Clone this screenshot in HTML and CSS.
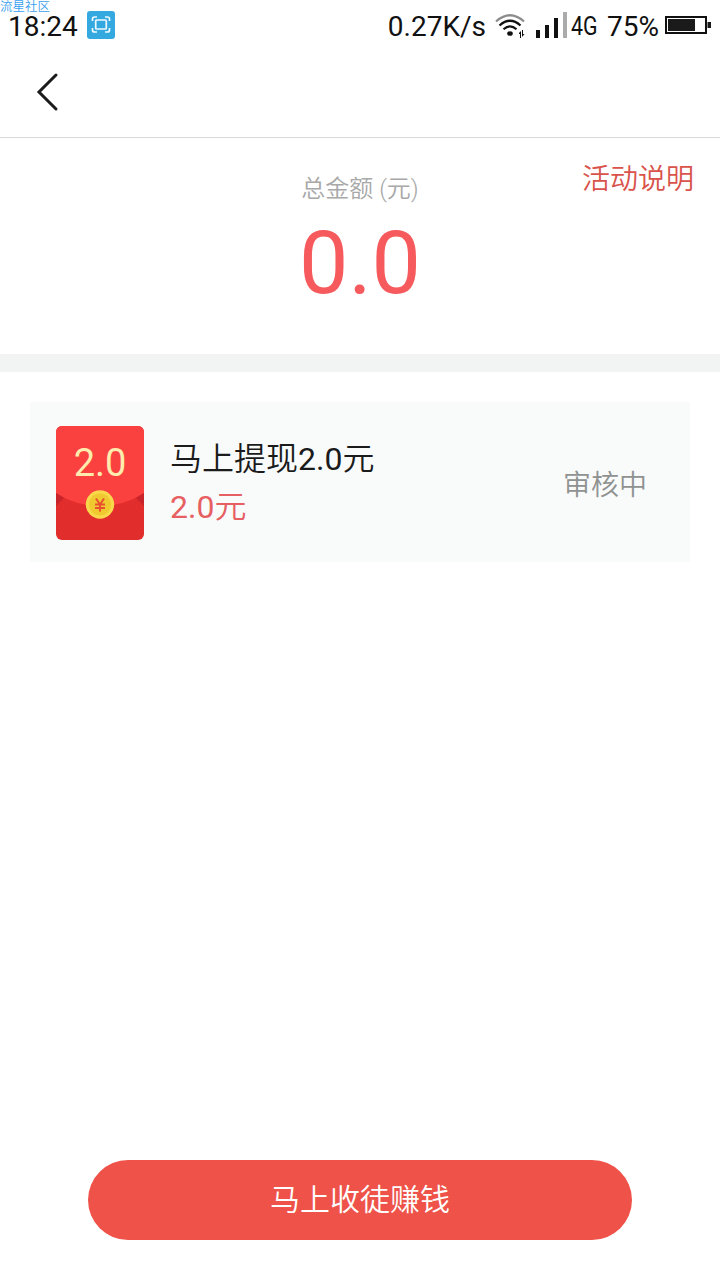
FILE: index.html
```html
<!DOCTYPE html>
<html lang="zh-CN">
<head>
<meta charset="utf-8">
<title>总金额</title>
<link rel="stylesheet" href="styles.css">
</head>
<body>
<div class="screen">
  <div class="status">
    <span class="watermark">流星社区</span>
    <span class="clock">18:24</span>
    <svg class="shot" width="28" height="28" viewBox="0 0 28 28">
      <rect width="28" height="28" rx="3" fill="#33a9e0"/>
      <g fill="none" stroke="#eefaff" stroke-width="1.7">
        <path d="M5.500 10V8q0-2 2-2H10M18 6h2.500q2 0 2 2v2M22.500 17v2q0 2-2 2H18M10 21H7.500q-2 0-2-2v-2"/>
        <rect x="8.700" y="9" width="10.600" height="9" rx="1"/>
      </g>
    </svg>
    <span class="speed">0.27K/s</span>
    <svg class="signals" width="76" height="30" viewBox="0 0 76 30">
      <g fill="none" stroke="#111" stroke-width="2.200">
        <path d="M1 9.500Q15-3 29 9.500" stroke="#8c8c8c"/>
        <path d="M4.500 13.500Q15 4 25.500 13.500"/>
        <path d="M8.500 17.300Q15 11.500 21.500 17.300"/>
      </g>
      <ellipse cx="15" cy="21.500" rx="2.800" ry="2.300" fill="#111"/>
      <path d="M24 21l2-2v7h-1v-4h-1zM27 18h1v4h1.500l-2.500 3z" fill="#111"/>
      <path d="M41 18h4v8h-4zM50 13h4v13h-4zM59 6h4v20h-4z" fill="#111"/>
      <path d="M68 0h4v26h-4z" fill="#ababab"/>
    </svg>
    <span class="net">4G</span>
    <span class="percent">75%</span>
    <svg class="battery" width="46" height="18" viewBox="0 0 46 18">
      <rect x="1" y="1" width="40" height="16" fill="none" stroke="#111" stroke-width="2"/>
      <path d="M3 3h27v12H3zM42.500 6h3.500v6h-3.500z" fill="#1a1a1a"/>
    </svg>
  </div>
  <header class="nav">
    <svg width="24" height="40" viewBox="0 0 24 40">
      <path d="M21 3L4 20l17 17" fill="none" stroke="#1b1b1b" stroke-width="3" stroke-linecap="round"/>
    </svg>
  </header>
  <section class="summary">
    <a class="rules">活动说明</a>
    <div class="label">总金额 (元)</div>
    <div class="total">0.0</div>
  </section>
  <main class="list">
    <article class="card">
      <div class="packet">
        <svg width="88" height="114" viewBox="0 0 88 114">
          <defs><clipPath id="body"><rect width="88" height="114" rx="6"/></clipPath></defs>
          <g clip-path="url(#body)">
            <rect width="88" height="114" fill="#e22d2d"/>
            <path d="M0 66l8 6-8 8zM88 66l-8 6 8 8z" fill="#c9242a"/>
            <path d="M0 0h88v67Q68 80 44 80T0 67z" fill="#fb4040"/>
          </g>
          <circle cx="44" cy="78.500" r="14.200" fill="#f9d84b"/>
          <circle cx="44" cy="78.500" r="11" fill="#efc92f"/>
          <path d="M40 72.500l4 6 4-6M44 78v7.500M39 78.500h10M39 82h10" fill="none" stroke="#e9502f" stroke-width="2"/>
        </svg>
        <span class="amount">2.0</span>
      </div>
      <div class="info">
        <div class="title">马上提现2.0元</div>
        <div class="price">2.0元</div>
      </div>
      <div class="state">审核中</div>
    </article>
  </main>
  <footer class="foot"><button class="invite">马上收徒赚钱</button></footer>
</div>
</body>
</html>
```
FILE: styles.css
```css
* { box-sizing: border-box; }
body {
  margin: 0;
  background: #fff;
  color: #1b1b1b;
  font-family: Roboto, "Noto Sans CJK SC DemiLight", "Noto Sans CJK SC Light", "Noto Sans CJK SC", sans-serif;
}
.screen {
  width: 720px;
  height: 1280px;
  display: flex;
  flex-direction: column;
}
.status {
  position: relative;
  height: 50px;
  display: flex;
  align-items: flex-start;
  padding: 10px 9px 0 8px;
  font-size: 28px;
  line-height: 33px;
  color: #111;
}
.watermark {
  position: absolute;
  left: 0;
  top: 0;
  font-size: 12.500px;
  line-height: 13px;
  color: #3a9ff0;
}
.clock { width: 79px; }
.shot { margin-top: 1px; }
.speed { margin-left: auto; }
.signals { margin: 2px 0 0 9px; }
.net {
  width: 26px;
  font-size: 26px;
  transform: scaleX(0.82);
  transform-origin: left;
}
.percent { margin-left: 10px; }
.battery { margin: 6px 0 0 6px; }
.nav {
  height: 88px;
  padding: 22px 0 0 35px;
  border-bottom: 1px solid #d9d9d9;
}
.nav svg { display: block; }
.summary {
  position: relative;
  height: 234px;
  padding-top: 35px;
  text-align: center;
  border-bottom: 18px solid #f2f4f4;
}
.rules {
  position: absolute;
  right: 26px;
  top: 22px;
  font-size: 28px;
  line-height: 40px;
  font-weight: 300;
  color: #d9534b;
}
.label {
  font-size: 24px;
  line-height: 32px;
  font-weight: 300;
  color: #a8a8a8;
}
.total {
  margin-top: 6px;
  font-size: 88px;
  line-height: 104px;
  color: #f65a5c;
}
.list {
  flex: 1;
  padding: 30px 30px 0;
}
.card {
  height: 160px;
  display: flex;
  align-items: center;
  padding: 2px 43px 0 26px;
  background: #f9fbfb;
}
.packet {
  position: relative;
  width: 88px;
  height: 114px;
}
.packet svg { display: block; }
.amount {
  position: absolute;
  left: 0;
  top: 15px;
  width: 88px;
  text-align: center;
  font-size: 38px;
  line-height: 44px;
  color: #ffebae;
}
.info {
  flex: 1;
  margin-left: 26px;
  font-size: 32px;
  line-height: 48px;
}
.price { color: #e65f62; }
.state {
  padding-top: 5px;
  font-size: 28px;
  line-height: 40px;
  font-weight: 300;
  color: #8f9290;
}
.foot {
  height: 120px;
  padding: 0 88px;
}
.invite {
  display: block;
  width: 100%;
  height: 80px;
  padding: 0 0 1px;
  border: 0;
  border-radius: 40px;
  background: #ee5248;
  color: #fff;
  font: inherit;
  font-size: 30px;
  font-weight: 300;
  line-height: 40px;
}
```
